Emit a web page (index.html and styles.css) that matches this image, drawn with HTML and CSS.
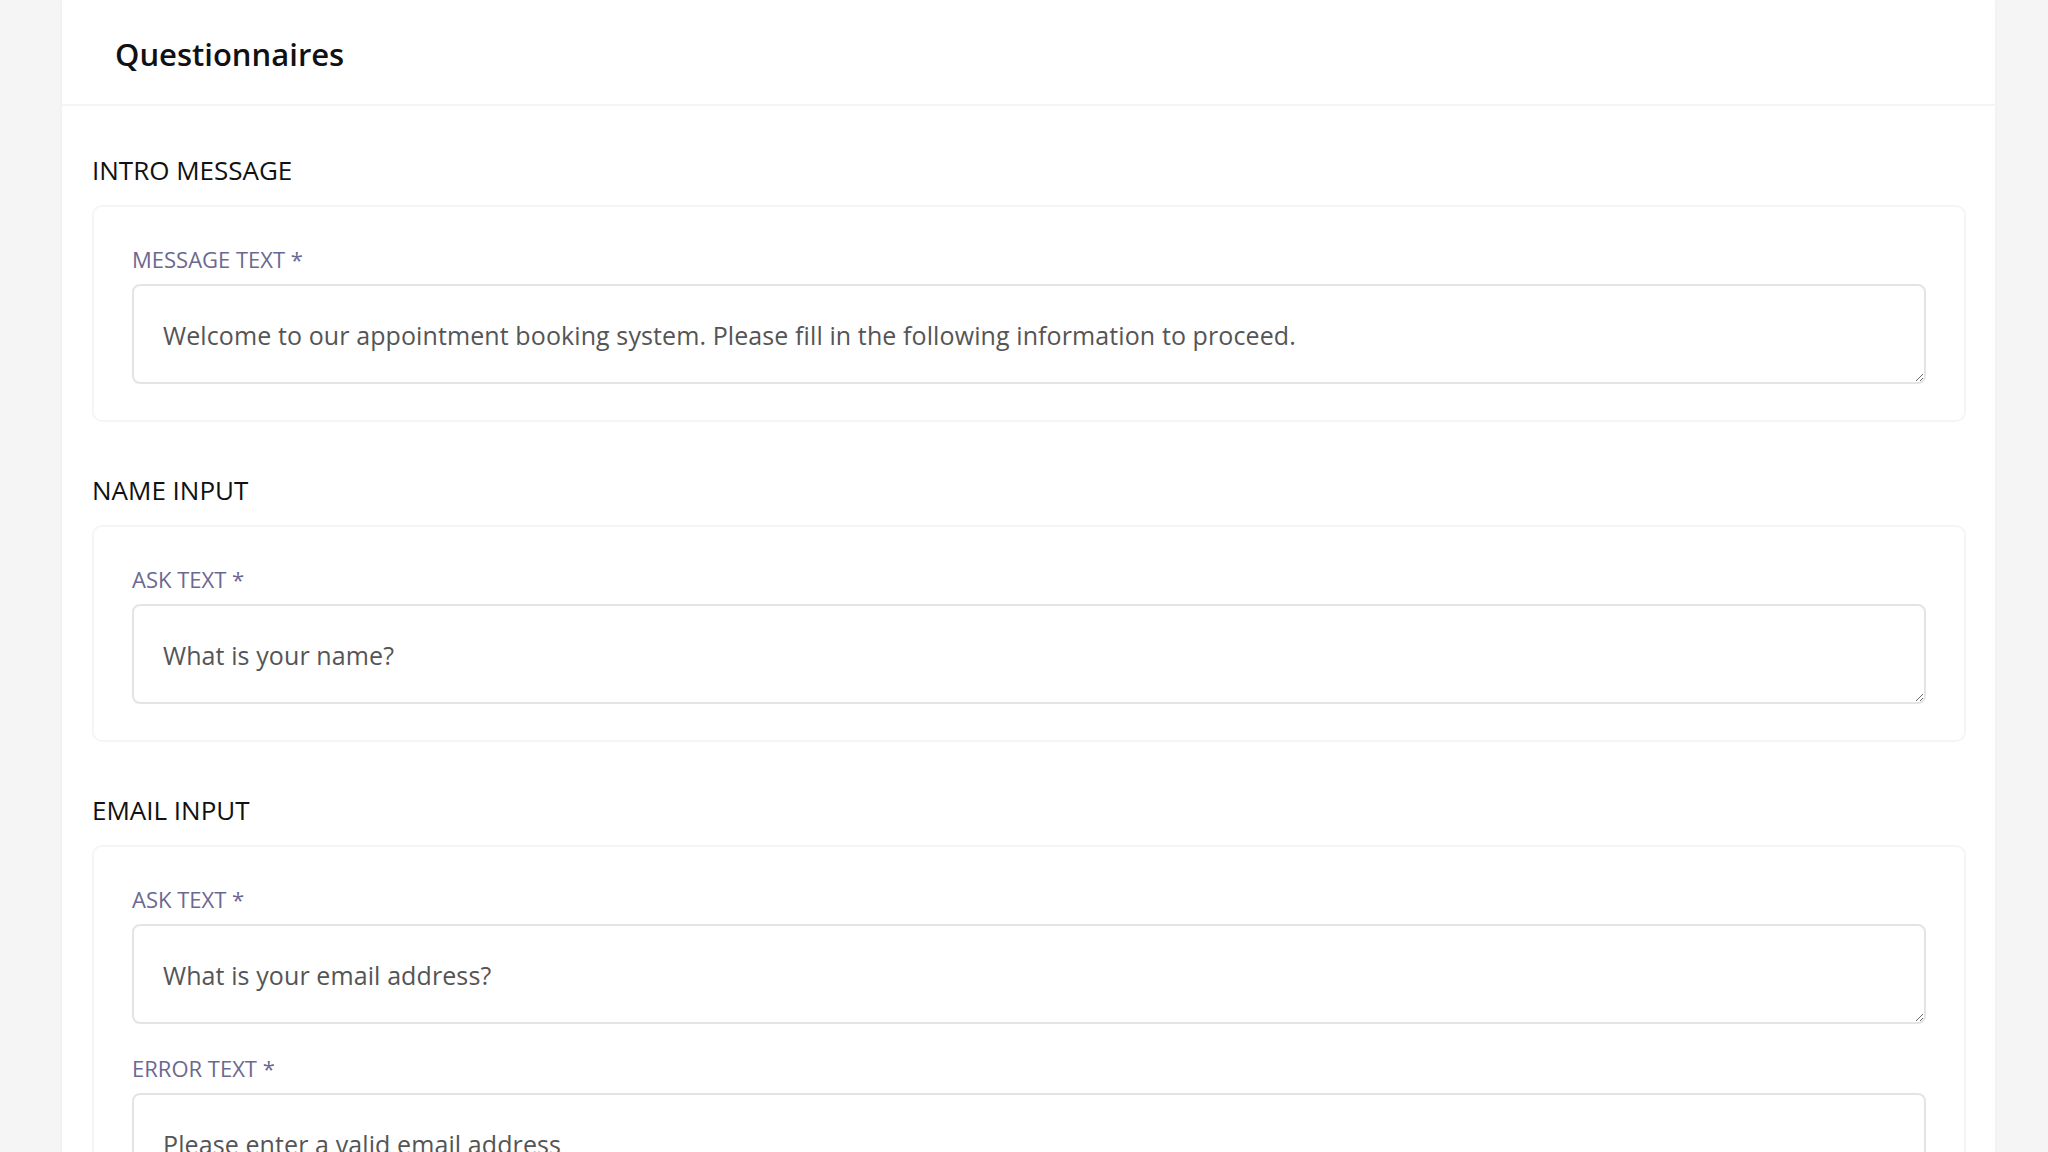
FILE: index.html
```html
<!DOCTYPE html>
<html lang="en">
<head>
    <meta charset="UTF-8">
    <meta name="viewport" content="width=device-width, initial-scale=1.0">
    <title>Questionnaires</title>
    <link rel="stylesheet" href="styles.css">
</head>
<body>

<div class="page-card">
    <div class="page-header">
        <h1>Questionnaires</h1>
    </div>

    <div class="page-body">
        <section class="block">
            <h2>INTRO MESSAGE</h2>
            <div class="block-card">
                <div class="field">
                    <label for="introText">MESSAGE TEXT *</label>
                    <textarea id="introText">Welcome to our appointment booking system. Please fill in the following information to proceed.</textarea>
                </div>
            </div>
        </section>

        <section class="block">
            <h2>NAME INPUT</h2>
            <div class="block-card">
                <div class="field">
                    <label for="nameAsk">ASK TEXT *</label>
                    <textarea id="nameAsk">What is your name?</textarea>
                </div>
            </div>
        </section>

        <section class="block">
            <h2>EMAIL INPUT</h2>
            <div class="block-card">
                <div class="field">
                    <label for="emailAsk">ASK TEXT *</label>
                    <textarea id="emailAsk">What is your email address?</textarea>
                </div>
                <div class="field">
                    <label for="emailError">ERROR TEXT *</label>
                    <textarea id="emailError">Please enter a valid email address</textarea>
                </div>
            </div>
        </section>
    </div>
</div>

</body>
</html>
```

FILE: styles.css
```css
body {
    font-family: 'Open Sans', 'Noto Sans', sans-serif;
    background-color: #f5f5f5;
    color: #111;
    margin: 0;
    padding: 0 53px 0 62px;
}

.page-card {
    background-color: #fff;
    border-radius: 0 0 10px 10px;
    box-shadow: 0 0 4px rgba(0, 0, 0, 0.04);
    min-height: 1200px;
}

.page-header {
    height: 106px;
    border-bottom: 2px solid #f4f4f4;
    display: flex;
    align-items: center;
    padding-left: 53px;
    padding-top: 4px;
    box-sizing: border-box;
}

.page-header h1 {
    margin: 0;
    font-size: 31px;
    font-weight: 600;
    color: #111;
}

.page-body {
    padding: 46px 29px 0 30px;
    display: flex;
    flex-direction: column;
    gap: 50px;
}

.block h2 {
    margin: 0 0 17px 0;
    font-size: 26px;
    line-height: 36px;
    font-weight: 400;
    color: #111;
}

.block-card {
    border: 2px solid #f5f5f5;
    border-radius: 10px;
    padding: 37px 38px 36px 38px;
    display: flex;
    flex-direction: column;
    gap: 29px;
}

.field label {
    display: block;
    font-size: 22px;
    line-height: 30px;
    color: #6b6891;
    margin-bottom: 10px;
}

.field textarea {
    display: block;
    width: 100%;
    height: 100px;
    box-sizing: border-box;
    padding: 30px 29px;
    font-family: 'Open Sans', 'Noto Sans', sans-serif;
    font-size: 25px;
    line-height: 38px;
    letter-spacing: 0.1px;
    color: #555;
    border: 2px solid #e4e4e4;
    border-radius: 8px;
    resize: vertical;
    overflow: hidden;
}
```
